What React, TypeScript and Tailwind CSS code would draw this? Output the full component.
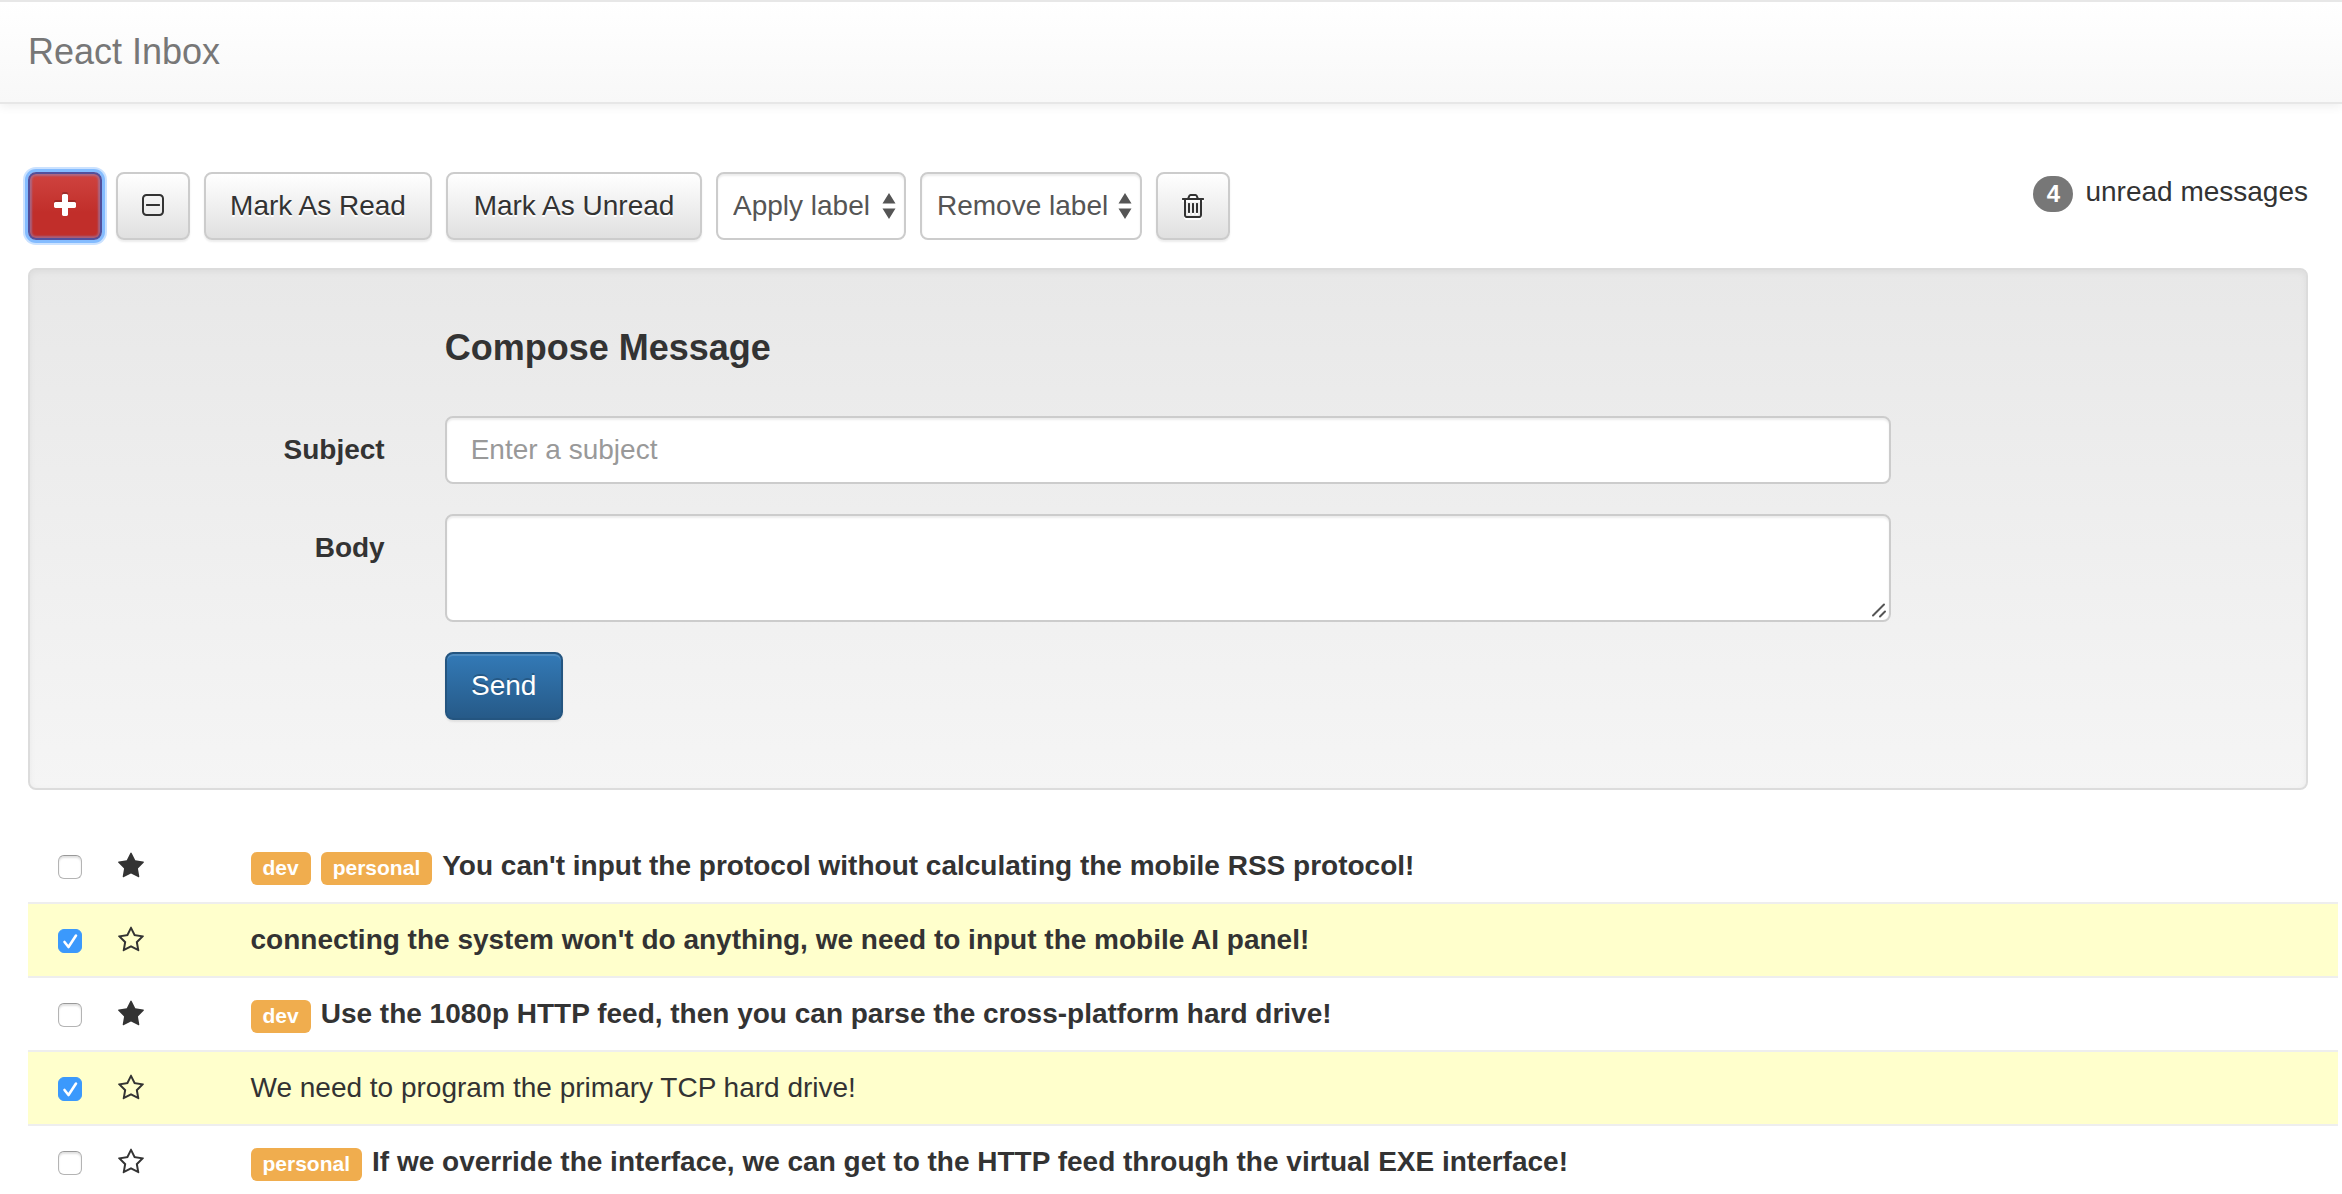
import { useState } from 'react';
import type { ReactNode } from 'react';

type Message = {
  id: number;
  subject: string;
  read: boolean;
  starred: boolean;
  selected: boolean;
  labels: string[];
};

const initialMessages: Message[] = [
  { id: 1, subject: "You can't input the protocol without calculating the mobile RSS protocol!", read: false, starred: true, selected: false, labels: ['dev', 'personal'] },
  { id: 2, subject: "connecting the system won't do anything, we need to input the mobile AI panel!", read: false, starred: false, selected: true, labels: [] },
  { id: 3, subject: 'Use the 1080p HTTP feed, then you can parse the cross-platform hard drive!', read: false, starred: true, selected: false, labels: ['dev'] },
  { id: 4, subject: 'We need to program the primary TCP hard drive!', read: true, starred: false, selected: true, labels: [] },
  { id: 5, subject: 'If we override the interface, we can get to the HTTP feed through the virtual EXE interface!', read: false, starred: false, selected: false, labels: ['personal'] },
];

const icons = {
  plus: 'M1600 736v192q0 40-28 68t-68 28h-416v416q0 40-28 68t-68 28h-192q-40 0-68-28t-28-68v-416h-416q-40 0-68-28t-28-68v-192q0-40 28-68t68-28h416v-416q0-40 28-68t68-28h192q40 0 68 28t28 68v416h416q40 0 68 28t28 68z',
  minusSquare:
    'M1344 800v64q0 14-9 23t-23 9h-832q-14 0-23-9t-9-23v-64q0-14 9-23t23-9h832q14 0 23 9t9 23zm128 448v-832q0-66-47-113t-113-47h-832q-66 0-113 47t-47 113v832q0 66 47 113t113 47h832q66 0 113-47t47-113zm128-832v832q0 119-84.5 203.5t-203.5 84.5h-832q-119 0-203.5-84.5t-84.5-203.5v-832q0-119 84.5-203.5t203.5-84.5h832q119 0 203.5 84.5t84.5 203.5z',
  trash:
    'M704 736v576q0 14-9 23t-23 9h-64q-14 0-23-9t-9-23v-576q0-14 9-23t23-9h64q14 0 23 9t9 23zm256 0v576q0 14-9 23t-23 9h-64q-14 0-23-9t-9-23v-576q0-14 9-23t23-9h64q14 0 23 9t9 23zm256 0v576q0 14-9 23t-23 9h-64q-14 0-23-9t-9-23v-576q0-14 9-23t23-9h64q14 0 23 9t9 23zm128 724v-948h-896v948q0 22 7 40.5t14.5 27 10.5 8.5h832q3 0 10.5-8.5t14.5-27 7-40.5zm-672-1076h448l-48-117q-7-9-17-11h-317q-10 2-17 11zm928 32v64q0 14-9 23t-23 9h-96v948q0 83-47 143.5t-113 60.5h-832q-66 0-113-58.5t-47-141.5v-952h-96q-14 0-23-9t-9-23v-64q0-14 9-23t23-9h309l70-167q15-37 54-63t79-26h320q40 0 79 26t54 63l70 167h309q14 0 23 9t9 23z',
  star: 'M1728 647q0 22-26 48l-363 354 86 500q1 7 1 20 0 21-10.5 35.5t-30.5 14.5q-19 0-40-12l-449-236-449 236q-22 12-40 12-21 0-31.5-14.5t-10.5-35.5q0-6 2-20l86-500-364-354q-25-27-25-48 0-37 56-46l502-73 225-455q19-41 49-41t49 41l225 455 502 73q56 9 56 46z',
  starOutline:
    'M1201 1004l306-297-422-62-189-382-189 382-422 62 306 297-73 421 378-199 377 199zm527-357q0 22-26 48l-363 354 86 500q1 7 1 20 0 50-41 50-19 0-40-12l-449-236-449 236q-22 12-40 12-21 0-31.5-14.5t-10.5-35.5q0-6 2-20l86-500-364-354q-25-27-25-48 0-37 56-46l502-73 225-455q19-41 49-41t49 41l225 455 502 73q56 9 56 46z',
};

function Icon({ name, className = '' }: { name: keyof typeof icons; className?: string }) {
  return (
    <svg viewBox="0 0 1792 1792" className={`size-7 ${className}`} fill="currentColor" aria-hidden="true">
      <path d={icons[name]} />
    </svg>
  );
}

const fieldClass =
  'rounded-lg border-2 border-[#ccc] bg-white text-[#555] shadow-[inset_0_2px_2px_rgba(0,0,0,0.075)] outline-none';

function ToolButton({ children, label, className }: { children: ReactNode; label?: string; className: string }) {
  return (
    <button
      type="button"
      aria-label={label}
      className={`flex h-[68px] cursor-pointer items-center justify-center whitespace-nowrap rounded-lg border-2 border-[#ccc] bg-linear-to-b from-white to-[#e0e0e0] shadow-[inset_0_2px_0_rgba(255,255,255,0.15),0_2px_2px_rgba(0,0,0,0.075)] [text-shadow:0_2px_0_#fff] ${className}`}
    >
      {children}
    </button>
  );
}

function LabelSelect({ title, className }: { title: string; className: string }) {
  return (
    <div className="relative">
      <select aria-label={title} defaultValue="" className={`block h-[68px] appearance-none pl-[15px] ${fieldClass} ${className}`}>
        <option value="">{title}</option>
        <option value="dev">dev</option>
        <option value="personal">personal</option>
        <option value="gmail">gmail</option>
      </select>
      <svg viewBox="0 0 14 26" className="pointer-events-none absolute top-[21px] right-[10px] h-[26px] w-[14px]" fill="#555" aria-hidden="true">
        <path d="M7 0l6.500 10.500H.5zM7 26L.5 15.500h13z" />
      </svg>
    </div>
  );
}

function MessageRow({ message, onSelect, onStar }: { message: Message; onSelect: () => void; onStar: () => void }) {
  return (
    <li
      className={`flex border-t-2 py-4 ${message.selected ? 'bg-[#ffffcc]' : 'bg-white'} ${
        message.id === 1 ? 'border-white' : 'border-[#eee]'
      }`}
    >
      <div className="flex w-1/12 shrink-0 items-center gap-[35px] pl-[30px]">
        <span className="relative mt-0.5 size-6 shrink-0">
          <input
            type="checkbox"
            aria-label={`Select: ${message.subject}`}
            checked={message.selected}
            onChange={onSelect}
            className="block size-6 appearance-none rounded-md border border-[#b4b4b4] border-t-[#999] bg-white shadow-[inset_0_2px_2px_rgba(0,0,0,0.12)] checked:border-[#3b99fc] checked:bg-[#3b99fc] checked:shadow-none"
          />
          {message.selected && (
            <svg viewBox="0 0 24 24" className="pointer-events-none absolute inset-0 size-6" fill="none" stroke="#fff" strokeWidth="2.6" strokeLinecap="round" strokeLinejoin="round" aria-hidden="true">
              <path d="M6.500 13l4 5L18 6.500" />
            </svg>
          )}
        </span>
        <button type="button" aria-label={message.starred ? 'Unstar' : 'Star'} aria-pressed={message.starred} onClick={onStar} className="cursor-pointer">
          <Icon name={message.starred ? 'star' : 'starOutline'} />
        </button>
      </div>
      <div className={`min-w-0 flex-1 px-[30px] ${message.read ? '' : 'font-bold'}`}>
        {message.labels.map((label) => (
          <span key={label} className="mr-[10px] rounded-md bg-[#f0ad4e] px-3 pt-1 pb-1.5 text-[21px] leading-none font-bold text-white">
            {label}
          </span>
        ))}
        <a href="#">{message.subject}</a>
      </div>
    </li>
  );
}

export default function App() {
  const [messages, setMessages] = useState(initialMessages);
  const toggle = (id: number, key: 'selected' | 'starred') =>
    setMessages((list) => list.map((m) => (m.id === id ? { ...m, [key]: !m[key] } : m)));

  return (
    <div className="bg-white font-['Liberation_Sans',Arial,sans-serif] text-[28px] leading-10 text-[#333]">
      <header className="flex h-[104px] items-center border-y-2 border-[#e7e7e7] bg-linear-to-b from-white to-[#f8f8f8] px-7 shadow-[inset_0_2px_0_rgba(255,255,255,0.15),0_2px_10px_rgba(0,0,0,0.075)]">
        <a href="#" className="text-4xl leading-10 text-[#777] [text-shadow:0_2px_0_rgba(255,255,255,0.25)]">
          React Inbox
        </a>
      </header>

      <main className="pt-[68px] pr-1 pl-7">
        <div className="mr-[30px] flex items-start gap-[14px]">
          <button
            type="button"
            aria-label="Compose message"
            className="flex h-[68px] w-[74px] cursor-pointer items-center justify-center rounded-lg border-2 border-[#53509b] bg-linear-to-b from-[#cf433f] to-[#c12e2a] to-60% text-white shadow-[inset_0_0_2px_2px_rgba(150,130,180,0.6),0_0_0_3px_#84bcff,0_0_0_5px_#cbe2ff]"
          >
            <Icon name="plus" className="[filter:drop-shadow(0_-2px_0_rgba(0,0,0,0.2))]" />
          </button>
          <ToolButton className="w-[74px]" label="Toggle selection">
            <Icon name="minusSquare" />
          </ToolButton>
          <ToolButton className="w-[228px]">Mark As Read</ToolButton>
          <ToolButton className="w-[256px]">Mark As Unread</ToolButton>
          <LabelSelect title="Apply label" className="w-[190px]" />
          <LabelSelect title="Remove label" className="w-[222px]" />
          <ToolButton className="w-[74px]" label="Delete">
            <Icon name="trash" className="[filter:drop-shadow(0_2px_0_#fff)]" />
          </ToolButton>
          <p className="ml-auto flex items-end gap-3">
            <span className="flex h-9 w-10 items-center justify-center rounded-[20px] bg-[#777] text-2xl font-bold text-white">4</span>
            unread messages
          </p>
        </div>

        <form
          onSubmit={(event) => event.preventDefault()}
          className="mt-7 mr-[30px] flex flex-col gap-[30px] rounded-lg border-2 border-[#dcdcdc] bg-linear-to-b from-[#e8e8e8] to-[#f5f5f5] px-2 pt-[58px] pb-[68px] shadow-[inset_0_2px_6px_rgba(0,0,0,0.05),0_2px_0_rgba(255,255,255,0.1)]"
        >
          <h2 className="mb-[18px] ml-[16.6667%] pl-[30px] text-4xl leading-10 font-bold">Compose Message</h2>
          <div className="flex">
            <label htmlFor="subject" className="w-1/6 pt-[14px] pr-[30px] text-right font-bold">
              Subject
            </label>
            <div className="w-2/3 px-[30px]">
              <input
                id="subject"
                type="text"
                placeholder="Enter a subject"
                className={`block h-[68px] w-full px-6 placeholder:text-[#999] ${fieldClass}`}
              />
            </div>
          </div>
          <div className="flex">
            <label htmlFor="body" className="w-1/6 pt-[14px] pr-[30px] text-right font-bold">
              Body
            </label>
            <div className="w-2/3 px-[30px]">
              <div className="relative">
                <textarea id="body" className={`block h-[108px] w-full resize-none px-6 py-3 ${fieldClass}`} />
                <svg viewBox="0 0 16 16" className="pointer-events-none absolute right-1 bottom-1 size-4" stroke="#555" strokeWidth="2" strokeLinecap="round" aria-hidden="true">
                  <path d="M2 13.500L13 2.500M9 14.500l5-5" />
                </svg>
              </div>
            </div>
          </div>
          <div className="ml-[16.6667%] pl-[30px]">
            <button
              type="submit"
              className="h-[68px] w-[118px] cursor-pointer rounded-lg border-2 border-[#245580] bg-linear-to-b from-[#337ab7] to-[#265a88] text-white shadow-[inset_0_2px_0_rgba(255,255,255,0.15),0_2px_2px_rgba(0,0,0,0.075)] [text-shadow:0_-2px_0_rgba(0,0,0,0.2)]"
            >
              Send
            </button>
          </div>
        </form>

        <ul className="mt-[38px]">
          {messages.map((message) => (
            <MessageRow
              key={message.id}
              message={message}
              onSelect={() => toggle(message.id, 'selected')}
              onStar={() => toggle(message.id, 'starred')}
            />
          ))}
        </ul>
      </main>
    </div>
  );
}
